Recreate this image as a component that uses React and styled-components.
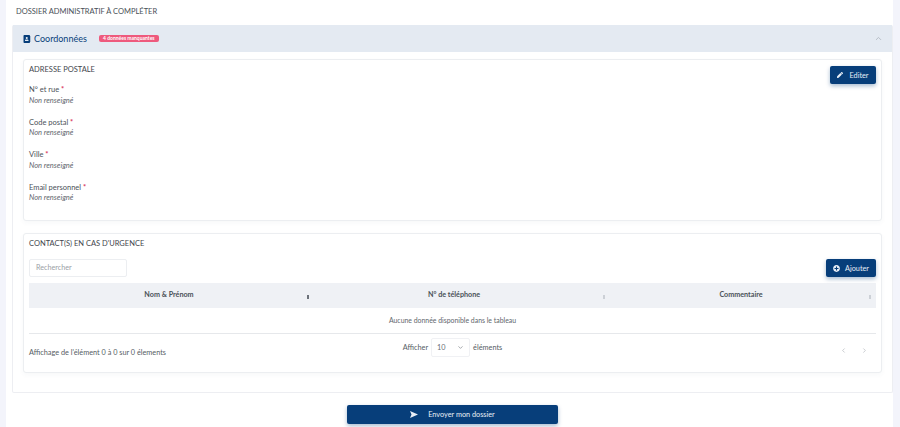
import styled, { createGlobalStyle } from 'styled-components';
import { FaPen, FaPlusCircle, FaAddressBook } from 'react-icons/fa';
import { ChevronUp, ChevronDown, ChevronLeft, ChevronRight } from 'lucide-react';

const GlobalStyle = createGlobalStyle`
  html, body {
    margin: 0;
    padding: 0;
    height: 427px;
    overflow: hidden;
    background: #f3f4fb;
    font-family: 'Lato', 'Open Sans', sans-serif;
    color: #495057;
  }
`;

const Page = styled.div`
  width: 887px;
  height: 427px;
  margin-left: 6px;
  padding: 0 0 0 6px;
  box-sizing: border-box;
  background: #fff;
`;

const PageTitle = styled.div`
  height: 25px;
  line-height: 23px;
  padding-left: 4px;
  font-size: 7.5px;
  color: #495057;
`;

const Accordion = styled.div`
  width: 881px;
  height: 368px;
  box-sizing: border-box;
  border: 1px solid #edeef2;
  border-top: 0;
  border-radius: 2px;
`;

const AccordionHeader = styled.div`
  height: 27px;
  background: #e4eaf2;
  display: flex;
  align-items: center;
  padding: 0 6px 0 10px;
  color: #073e7a;
  font-size: 9px;

  svg {
    margin-right: 3px;
  }
`;

const Badge = styled.span`
  margin-left: 12px;
  padding: 0 2px;
  width: 60px;
  box-sizing: border-box;
  text-align: center;
  height: 7px;
  line-height: 7px;
  font-size: 5px;
  font-weight: 700;
  color: #fff;
  background: #ee5a7d;
  border-radius: 2px;
`;

const Toggle = styled.span`
  margin-left: auto;
  display: flex;
  color: #a9b0ba;
`;

const AccordionBody = styled.div`
  padding: 7px 10px 0 10px;
  display: flex;
  flex-direction: column;
  gap: 12px;
`;

const Card = styled.section`
  height: ${(p) => p.$height}px;
  box-sizing: border-box;
  background: #fff;
  border: 1px solid #eceef1;
  border-radius: 3px;
  box-shadow: 0 2px 5px rgba(60, 70, 90, 0.04);
  padding: 0 5px;
`;

const CardHead = styled.div`
  display: flex;
  justify-content: space-between;
  align-items: flex-start;
`;

const CardTitle = styled.h3`
  margin: 0;
  font-weight: 400;
  font-size: 7.5px;
  line-height: 19px;
  color: #3f464d;
`;

const Button = styled.button`
  display: flex;
  align-items: center;
  justify-content: center;
  gap: ${(p) => p.$gap || 6}px;
  width: ${(p) => p.$width}px;
  height: ${(p) => p.$height || 18}px;
  padding: 0;
  border: 0;
  border-radius: 2px;
  background: #073e7a;
  color: #e8eef6;
  font-family: inherit;
  font-size: 7.3px;
  box-shadow: 0 2px 4px rgba(7, 62, 122, 0.35);
`;

const EditButton = styled(Button)`
  margin-top: 6px;
`;

const Field = styled.div`
  height: 32.5px;
  font-size: 7.5px;
  line-height: 10.5px;
`;

const Fields = styled.div`
  margin-top: 1px;
`;

const Label = styled.div`
  color: #4b5259;

  b {
    color: #d8325c;
  }
`;

const Empty = styled.div`
  font-style: italic;
  color: #5f666d;
`;

const Toolbar = styled.div`
  display: flex;
  justify-content: space-between;
  margin-top: 6px;
`;

const Search = styled.div`
  width: 98px;
  height: 18px;
  box-sizing: border-box;
  border: 1px solid #eceef1;
  border-radius: 2px;
  padding-left: 6px;
  line-height: 16px;
  font-size: 7.2px;
  color: #9aa0a6;
`;

const Table = styled.div`
  margin-top: 6px;
  border-bottom: 1px solid #e6e8eb;
`;

const TableHead = styled.div`
  display: grid;
  grid-template-columns: 285px 296px 1fr;
  height: 25px;
  background: #eff1f5;
`;

const HeadCell = styled.div`
  display: flex;
  align-items: center;
  justify-content: center;
  position: relative;
  font-size: 7.2px;
  font-weight: 700;
  color: #495057;
  padding: 0 ${(p) => p.$shift}px 3px 0;
  box-sizing: border-box;
`;

const Sort = styled.span`
  position: absolute;
  right: 5px;
  top: 12px;
  width: 2px;
  height: 4px;
  background: ${(p) => (p.$active ? '#6c727a' : '#ccd0d6')};
`;

const EmptyRow = styled.div`
  height: 25px;
  line-height: 25px;
  text-align: center;
  font-size: 6.9px;
  color: #5f666d;
`;

const Footer = styled.div`
  display: grid;
  grid-template-columns: 1fr auto 1fr;
  align-items: flex-start;
  margin-top: 4px;
  font-size: 7.3px;
  color: #565d64;
`;

const Info = styled.div`
  margin-top: 10px;
`;

const Length = styled.div`
  display: flex;
  align-items: center;
  gap: 3px;
`;

const Select = styled.div`
  width: 39px;
  height: 19px;
  box-sizing: border-box;
  border: 1px solid #f0f1f4;
  border-radius: 2px;
  padding: 0 5px;
  display: flex;
  align-items: center;
  justify-content: space-between;
  color: #6a7077;
`;

const Pager = styled.div`
  display: flex;
  justify-content: flex-end;
  gap: 14px;
  margin: 9px 8px 0 0;
  color: #a6abb2;
`;

const Actions = styled.div`
  display: flex;
  justify-content: center;
  margin-top: 12px;
`;

const SendIcon = () => (
  <svg width="8" height="7" viewBox="0 0 8 7" fill="currentColor">
    <polygon points="0,0 8,3.5 0,7 1.5,3.5" />
  </svg>
);

const App = () => {
  return (
    <>
      <GlobalStyle />
      <Page>
        <PageTitle>DOSSIER ADMINISTRATIF À COMPLÉTER</PageTitle>
        <Accordion>
          <AccordionHeader>
            <FaAddressBook size={8} />
            Coordonnées
            <Badge>4 données manquantes</Badge>
            <Toggle>
              <ChevronUp size={9} />
            </Toggle>
          </AccordionHeader>
          <AccordionBody>
            <Card $height={162}>
              <CardHead>
                <CardTitle>ADRESSE POSTALE</CardTitle>
                <EditButton $width={46}>
                  <FaPen size={6} />
                  Editer
                </EditButton>
              </CardHead>
              <Fields>
                {['N° et rue', 'Code postal', 'Ville', 'Email personnel'].map((name) => (
                  <Field key={name}>
                    <Label>
                      {name} <b>*</b>
                    </Label>
                    <Empty>Non renseigné</Empty>
                  </Field>
                ))}
              </Fields>
            </Card>
            <Card $height={140}>
              <CardTitle>CONTACT(S) EN CAS D'URGENCE</CardTitle>
              <Toolbar>
                <Search>Rechercher</Search>
                <Button $width={50} $gap={5}>
                  <FaPlusCircle size={7} />
                  Ajouter
                </Button>
              </Toolbar>
              <Table>
                <TableHead>
                  <HeadCell $shift={5}>
                    Nom &amp; Prénom
                    <Sort $active />
                  </HeadCell>
                  <HeadCell $shift={16}>
                    N° de téléphone
                    <Sort />
                  </HeadCell>
                  <HeadCell $shift={4}>
                    Commentaire
                    <Sort />
                  </HeadCell>
                </TableHead>
                <EmptyRow>Aucune donnée disponible dans le tableau</EmptyRow>
              </Table>
              <Footer>
                <Info>Affichage de l'élément 0 à 0 sur 0 élements</Info>
                <Length>
                  Afficher
                  <Select>
                    10
                    <ChevronDown size={7} />
                  </Select>
                  éléments
                </Length>
                <Pager>
                  <ChevronLeft size={7} />
                  <ChevronRight size={7} />
                </Pager>
              </Footer>
            </Card>
          </AccordionBody>
        </Accordion>
        <Actions>
          <Button $width={211} $height={19} $gap={10}>
            <SendIcon />
            Envoyer mon dossier
          </Button>
        </Actions>
      </Page>
    </>
  );
};

export default App;
